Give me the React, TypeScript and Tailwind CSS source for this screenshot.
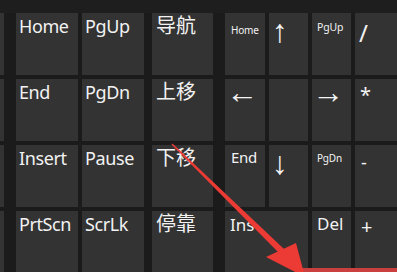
import type { ReactNode } from 'react';

type KeyDef = { label?: string; cls?: string; span?: string };

const big = 'pl-[3px] pt-[4px] text-[18px] leading-none tracking-[-0.4px]';
const cjk = "pl-[4px] pt-[2px] font-['Noto_Sans_CJK_SC',sans-serif] text-[20px] leading-none";
const arrow = "font-['Liberation_Sans',sans-serif] text-[32px] leading-none";

const mainRows: KeyDef[][] = [
  [{ label: 'Home', cls: big }, { label: 'PgUp', cls: big }, { label: '导航', cls: cjk }],
  [{ label: 'End', cls: big }, { label: 'PgDn', cls: big }, { label: '上移', cls: cjk }],
  [{ label: 'Insert', cls: big }, { label: 'Pause', cls: big }, { label: '下移', cls: cjk }],
  [{ label: 'PrtScn', cls: big }, { label: 'ScrLk', cls: big }, { label: '停靠', cls: cjk }],
];

const numpad: KeyDef[] = [
  { label: 'Home', cls: 'pl-[6px] pt-[12px] text-[10px] leading-none tracking-[-0.2px]' },
  { label: '↑', cls: `${arrow} pl-[3px] pt-[2px]` },
  { label: 'PgUp', cls: 'pl-[5px] pt-[9px] text-[10.5px] leading-none tracking-[-0.2px]' },
  { label: '/', cls: 'pl-[4px] pt-[8px] text-[24px] leading-none' },
  { label: '←', cls: `${arrow} -mt-[3px] pl-[1px]` },
  {},
  { label: '→', cls: `${arrow} -mt-[3px] pl-0` },
  { label: '*', cls: 'pl-[5px] pt-[6px] text-[20px] leading-none' },
  { label: 'End', cls: 'pl-[6px] pt-[5px] text-[15px] leading-none tracking-[-0.3px]' },
  { label: '↓', cls: `${arrow} pl-[3px] pt-[2px]` },
  { label: 'PgDn', cls: 'pl-[5px] pt-[8px] text-[10px] leading-none tracking-[-0.2px]' },
  { label: '-', cls: 'pl-[6px] pt-[8px] text-[18px] leading-none' },
  { label: 'Ins', span: 'col-span-2', cls: 'pl-[5px] pt-[5px] text-[17px] leading-none' },
  { label: 'Del', cls: 'pl-[5px] pt-[4px] text-[17px] leading-none' },
  { label: '+', cls: 'pl-[6px] pt-[6px] text-[20px] leading-none' },
];

function Key({ children, className = '' }: { children?: ReactNode; className?: string }) {
  return <div className={`h-[62px] bg-[#333333] ${className}`}>{children}</div>;
}

function Label({ text, cls }: { text?: string; cls?: string }) {
  if (!text) return null;
  return <div className={`whitespace-nowrap ${cls ?? ''}`}>{text}</div>;
}

export default function App() {
  return (
    <div className="relative h-[272px] w-[397px] overflow-hidden bg-[#1b1b1b] font-['Noto_Sans','Noto_Sans_CJK_SC',sans-serif] text-[#f2f2f2]">
      <div className="h-[13px] bg-[#1e1e1e]" />

      <div className="flex">
        {/* cut-off column on the left edge */}
        <div className="flex w-[4px] flex-col gap-1">
          <Key />
          <Key />
          <Key />
          <Key />
        </div>

        {/* navigation block */}
        <div className="ml-[12px] grid grid-cols-[62px_62px_65px] gap-1">
          {mainRows.flat().map((k, i) => (
            <Key key={i} className={i % 3 === 2 ? 'ml-1' : ''}>
              <Label text={k.label} cls={k.cls} />
            </Key>
          ))}
        </div>

        {/* number pad */}
        <div className="ml-[12px] grid grid-cols-[40px_39px_39px_42px] gap-1">
          {numpad.map((k, i) => (
            <Key key={i} className={k.span ?? ''}>
              <Label text={k.label} cls={k.cls} />
            </Key>
          ))}
        </div>
      </div>

      {/* red annotation */}
      <svg className="pointer-events-none absolute inset-0" width="397" height="272" viewBox="0 0 397 272">
        <rect x="300" y="268" width="97" height="4" fill="#c9403e" />
        <polygon points="171.5,144.5 172.5,143.5 284,249 279.5,253.5" fill="#ec3a35" />
        <polygon points="266,257 296,243 305,277" fill="#ec3a35" />
      </svg>
    </div>
  );
}
